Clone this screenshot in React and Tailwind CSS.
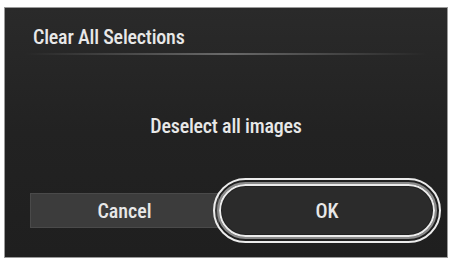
import React from 'react'

const font = { fontFamily: '"Roboto Condensed", Roboto, sans-serif' }

export default function App() {
  return (
    <div className="w-[451px] h-[260px] bg-white pt-[7px] pl-[4px]" style={font}>
      <div className="w-[444px] h-[251px] border border-[#9a9a9a] flex flex-col bg-gradient-to-b from-[#2a2a2a] via-[#222222] to-[#1f1f1f]">
        <div className="px-[28px] pt-[17px] h-[45px] text-[20px] leading-[24px] font-medium tracking-[-0.2px] text-[#e8e8e8]">
          Clear All Selections
        </div>
        <div className="mx-[20px] h-[2px] bg-gradient-to-r from-transparent via-[#6a6a6a] to-transparent" />
        <div className="flex justify-center pt-[59px] text-[20px] leading-[24px] font-medium tracking-[-0.2px] text-[#e8e8e8]">
          Deselect all images
        </div>
        <div className="flex items-center pl-[25px] pt-[49px]">
          <div className="w-[189px] h-[35px] bg-[#3c3c3c] border border-[#4a4a4a] flex items-center justify-center text-[20px] font-medium text-[#e8e8e8]">
            Cancel
          </div>
          <div className="relative w-[210px] h-[47px] ml-[3px] rounded-full bg-[#2b2b2b] flex items-center justify-center text-[20px] font-medium text-[#e8e8e8]">
            OK
            <div className="absolute -inset-[9px] rounded-full border-2 border-[#ececec] p-[2px]">
              <div className="w-full h-full rounded-full border-[2px] border-[#8a8a8a]">
                <div className="w-full h-full rounded-full border-2 border-[#ececec]" />
              </div>
            </div>
          </div>
        </div>
      </div>
    </div>
  )
}
